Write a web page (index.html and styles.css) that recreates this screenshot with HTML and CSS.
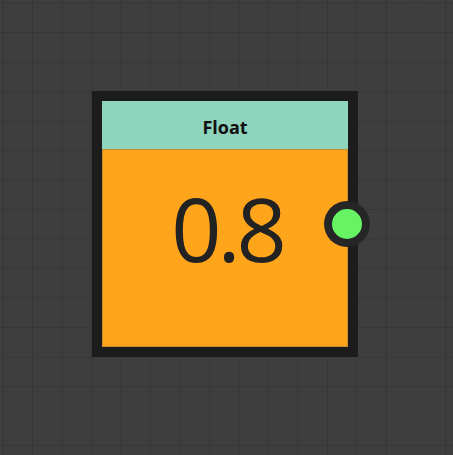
FILE: index.html
```html
<!DOCTYPE html>
<html>
<head>
<meta charset="utf-8">
<link rel="stylesheet" href="styles.css">
</head>
<body>
<div class="canvas">
  <div class="node">
    <div class="node-header">Float</div>
    <div class="node-body">0.8</div>
    <div class="port"><div class="port-dot"></div></div>
  </div>
</div>
</body>
</html>
```
FILE: styles.css
```css
html, body {
  margin: 0;
  padding: 0;
}
body {
  width: 453px;
  height: 455px;
  overflow: hidden;
  font-family: "Open Sans", "Noto Sans", sans-serif;
}
.canvas {
  position: relative;
  width: 453px;
  height: 455px;
  background-color: #3e3e3e;
  background-image:
    linear-gradient(to right, #373737 1px, transparent 1px),
    linear-gradient(to bottom, #373737 1px, transparent 1px);
  background-size: 29.5px 29.5px;
  background-position: 2.5px 2.5px;
}
.node {
  position: absolute;
  left: 92px;
  top: 91px;
  width: 246px;
  height: 246px;
  border: 10px solid #1c1c1c;
  display: flex;
  flex-direction: column;
}
.node-header {
  height: 48px;
  background: #8fd4bc;
  color: #111;
  font-weight: 700;
  font-size: 18px;
  padding-top: 3px;
  box-sizing: border-box;
  display: flex;
  align-items: center;
  justify-content: center;
}
.node-body {
  flex: 1;
  background: #ffa51c;
  box-shadow: inset 0 0 0 1px #c98a2a;
  color: #222;
  font-size: 88px;
  letter-spacing: -4px;
  text-indent: 4px;
  display: flex;
  align-items: center;
  justify-content: center;
  line-height: 1;
  padding-bottom: 40px;
  box-sizing: border-box;
}
.port {
  position: absolute;
  left: 222px;
  top: 100px;
  width: 46px;
  height: 46px;
  border-radius: 50%;
  background: #262626;
  display: flex;
  align-items: center;
  justify-content: center;
}
.port-dot {
  width: 30px;
  height: 30px;
  border-radius: 50%;
  background: #66f464;
}
```
